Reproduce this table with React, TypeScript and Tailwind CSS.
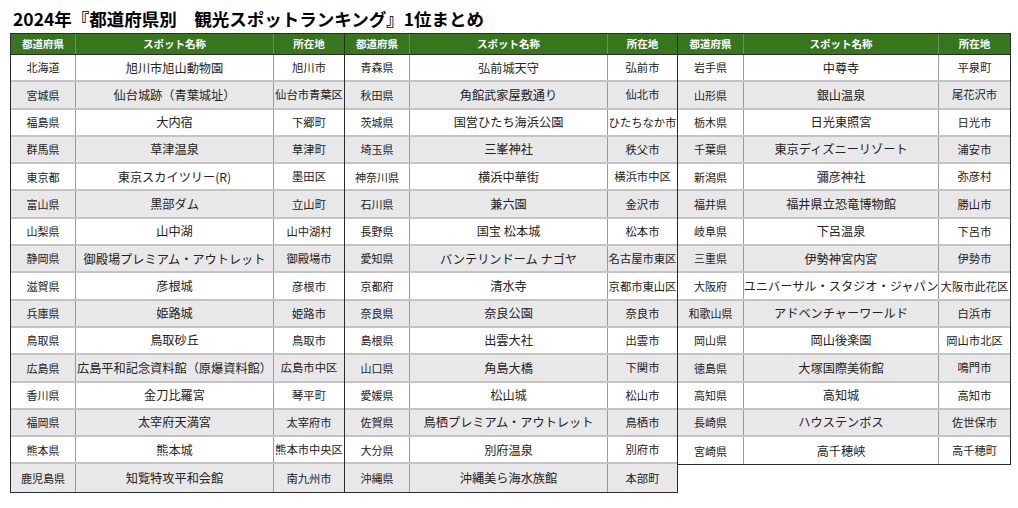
type Row = [string, string, string];

const table1: Row[] = [
  ['北海道', '旭川市旭山動物園', '旭川市'],
  ['宮城県', '仙台城跡（青葉城址）', '仙台市青葉区'],
  ['福島県', '大内宿', '下郷町'],
  ['群馬県', '草津温泉', '草津町'],
  ['東京都', '東京スカイツリー(R)', '墨田区'],
  ['富山県', '黒部ダム', '立山町'],
  ['山梨県', '山中湖', '山中湖村'],
  ['静岡県', '御殿場プレミアム・アウトレット', '御殿場市'],
  ['滋賀県', '彦根城', '彦根市'],
  ['兵庫県', '姫路城', '姫路市'],
  ['鳥取県', '鳥取砂丘', '鳥取市'],
  ['広島県', '広島平和記念資料館（原爆資料館）', '広島市中区'],
  ['香川県', '金刀比羅宮', '琴平町'],
  ['福岡県', '太宰府天満宮', '太宰府市'],
  ['熊本県', '熊本城', '熊本市中央区'],
  ['鹿児島県', '知覧特攻平和会館', '南九州市'],
];

const table2: Row[] = [
  ['青森県', '弘前城天守', '弘前市'],
  ['秋田県', '角館武家屋敷通り', '仙北市'],
  ['茨城県', '国営ひたち海浜公園', 'ひたちなか市'],
  ['埼玉県', '三峯神社', '秩父市'],
  ['神奈川県', '横浜中華街', '横浜市中区'],
  ['石川県', '兼六園', '金沢市'],
  ['長野県', '国宝 松本城', '松本市'],
  ['愛知県', 'バンテリンドーム ナゴヤ', '名古屋市東区'],
  ['京都府', '清水寺', '京都市東山区'],
  ['奈良県', '奈良公園', '奈良市'],
  ['島根県', '出雲大社', '出雲市'],
  ['山口県', '角島大橋', '下関市'],
  ['愛媛県', '松山城', '松山市'],
  ['佐賀県', '鳥栖プレミアム・アウトレット', '鳥栖市'],
  ['大分県', '別府温泉', '別府市'],
  ['沖縄県', '沖縄美ら海水族館', '本部町'],
];

const table3: Row[] = [
  ['岩手県', '中尊寺', '平泉町'],
  ['山形県', '銀山温泉', '尾花沢市'],
  ['栃木県', '日光東照宮', '日光市'],
  ['千葉県', '東京ディズニーリゾート', '浦安市'],
  ['新潟県', '彌彦神社', '弥彦村'],
  ['福井県', '福井県立恐竜博物館', '勝山市'],
  ['岐阜県', '下呂温泉', '下呂市'],
  ['三重県', '伊勢神宮内宮', '伊勢市'],
  ['大阪府', 'ユニバーサル・スタジオ・ジャパン', '大阪市此花区'],
  ['和歌山県', 'アドベンチャーワールド', '白浜市'],
  ['岡山県', '岡山後楽園', '岡山市北区'],
  ['徳島県', '大塚国際美術館', '鳴門市'],
  ['高知県', '高知城', '高知市'],
  ['長崎県', 'ハウステンボス', '佐世保市'],
  ['宮崎県', '高千穂峡', '高千穂町'],
];

interface RankTableProps {
  rows: Row[];
  cols: [string, string, string]; // grid widths
  first?: boolean;
}

const RankTable = ({ rows, cols, first }: RankTableProps) => {
  const grid = `${cols[0]} ${cols[1]} ${cols[2]}`;
  return (
    <div
      className={`self-start border border-[#2b2b2b] bg-white ${first ? '' : '-ml-px'}`}
    >
      <div
        className="grid h-[21px] bg-[#38761d] border-b border-[#2b2b2b] text-[10.5px] font-bold text-white"
        style={{ gridTemplateColumns: grid }}
      >
        <div className="flex items-center justify-center border-r border-[#6f8f5c]">都道府県</div>
        <div className="flex items-center justify-center border-r border-[#6f8f5c]">スポット名称</div>
        <div className="flex items-center justify-center">所在地</div>
      </div>
      {rows.map(([pref, spot, place], i) => (
        <div
          key={pref}
          className={`grid h-[27.3px] text-[#222] ${i % 2 === 1 ? 'bg-[#e8e8e8]' : 'bg-white'} ${
            i < rows.length - 1 ? 'border-b-2 border-[#c4c4c4]' : ''
          }`}
          style={{ gridTemplateColumns: grid }}
        >
          <div className="flex items-center justify-center overflow-hidden whitespace-nowrap border-r border-[#9a9a9a] text-[11px]">
            {pref}
          </div>
          <div className="flex items-center justify-center overflow-hidden whitespace-nowrap border-r border-[#9a9a9a] text-[12.2px]">
            {spot}
          </div>
          <div className="flex items-center justify-center overflow-hidden whitespace-nowrap text-[11.3px]">
            {place}
          </div>
        </div>
      ))}
    </div>
  );
};

export default function App() {
  return (
    <div
      className="w-[1018px] h-[508px] bg-white pl-[10px]"
      style={{ fontFamily: '"Noto Sans CJK JP", "Noto Sans", sans-serif' }}
    >
      <h1 className="h-[33px] pl-[3px] pt-[7px] text-[17.5px] font-bold leading-[24px] text-black whitespace-nowrap">
        2024年『都道府県別　観光スポットランキング』1位まとめ
      </h1>
      <div className="flex">
        <RankTable rows={table1} cols={['65px', '198px', '70px']} first />
        <RankTable rows={table2} cols={['65px', '198px', '69px']} />
        <RankTable rows={table3} cols={['66px', '195px', '71px']} />
      </div>
    </div>
  );
}
